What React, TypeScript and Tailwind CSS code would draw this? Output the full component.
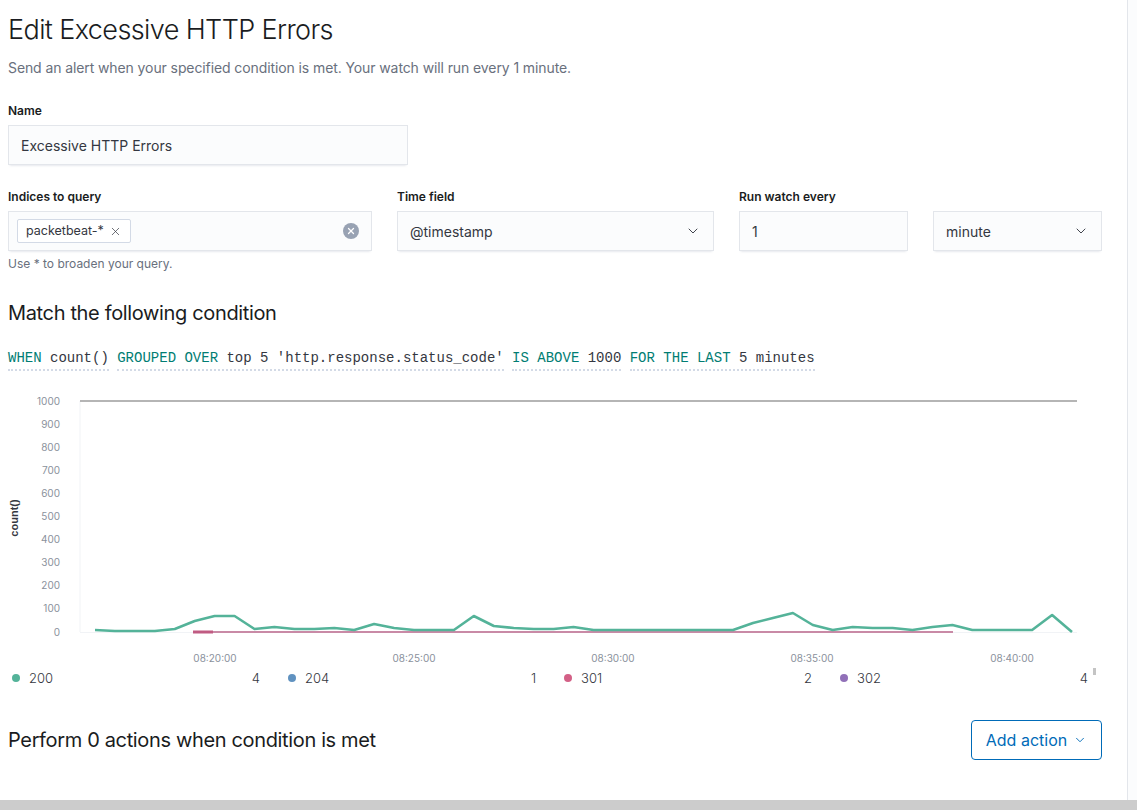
import { ChevronDown, X } from 'lucide-react';

const greenY = [
  629, 630, 630, 630, 628, 620, 615, 615, 628, 626, 628, 628, 627, 629, 623, 627, 629, 629, 629, 615,
  625, 627, 628, 628, 626, 629, 629, 629, 629, 629, 629, 629, 629, 622, 617, 612, 624, 629, 626, 627,
  627, 629, 626, 624, 629, 629, 629, 629, 614, 631,
];

const yTicks = [1000, 900, 800, 700, 600, 500, 400, 300, 200, 100, 0];
const xTicks = [
  { x: 215, label: '08:20:00' },
  { x: 414, label: '08:25:00' },
  { x: 613, label: '08:30:00' },
  { x: 812, label: '08:35:00' },
  { x: 1012, label: '08:40:00' },
];

const legend = [
  { label: '200', value: '4', dot: 'bg-[#54b399]' },
  { label: '204', value: '1', dot: 'bg-[#6092c0]' },
  { label: '301', value: '2', dot: 'bg-[#d36086]' },
  { label: '302', value: '4', dot: 'bg-[#9170b8]' },
];

const fieldBox =
  'h-10 bg-[#fbfcfd] border border-[#e3e6eb] shadow-[0_1px_1px_-1px_rgba(152,162,179,0.2),0_3px_2px_-2px_rgba(152,162,179,0.2)] flex items-center px-3 text-[14px] text-[#343741]';

function Chart() {
  const top = 388;
  const points = greenY
    .map((y, i) => `${(95 + (i * 977) / 49).toFixed(1)},${y}`)
    .join(' ');

  return (
    <svg width="1100" height="278" className="block -ml-2" aria-label="count() over time">
      <g transform={`translate(0,${-top})`}>
        {/* axes */}
        <line x1="80" y1="400" x2="80" y2="631" stroke="#f1f3f6" strokeWidth="1" />
        <line x1="80" y1="631.5" x2="1077" y2="631.5" stroke="#f1f3f6" strokeWidth="1" />
        <line x1="80" y1="400" x2="1077" y2="400" stroke="#b5b5b5" strokeWidth="2" />

        {yTicks.map((t, i) => (
          <text
            key={t}
            x="60"
            y={400 + i * 23.1 + 3.5}
            textAnchor="end"
            fontSize="10"
            fill="#8a919c"
            fontFamily="Inter, sans-serif"
          >
            {t}
          </text>
        ))}

        {xTicks.map((t) => (
          <text
            key={t.label}
            x={t.x}
            y="660.5"
            textAnchor="middle"
            fontSize="10"
            fill="#8a919c"
            fontFamily="Inter, sans-serif"
          >
            {t.label}
          </text>
        ))}

        <text
          transform="translate(18,517) rotate(-90)"
          textAnchor="middle"
          fontSize="11"
          fontWeight="700"
          fill="#343741"
          fontFamily="'Liberation Sans', Arial, sans-serif"
        >
          count()
        </text>

        {/* series */}
        <line x1="193" y1="631" x2="953" y2="631" stroke="#c98aa6" strokeWidth="2" />
        <line x1="193" y1="631" x2="213" y2="631" stroke="#c05b82" strokeWidth="3" />
        <polyline
          points={points}
          fill="none"
          stroke="#54b399"
          strokeWidth="2.6"
          strokeLinejoin="round"
        />
      </g>
    </svg>
  );
}

export default function App() {
  return (
    <div className="w-[1137px] h-[810px] bg-white overflow-hidden font-['Inter',sans-serif] text-[#1a1c21]">
      <div className="flex h-[800px]">
        <main className="w-[1127px] pl-2">
          <h1 className="mt-[13px] text-[27px] leading-[34px] font-light tracking-[-0.6px] text-[#1a1c21]">
            Edit Excessive HTTP Errors
          </h1>
          <p className="mt-[11px] text-[14px] leading-5 tracking-[-0.1px] text-[#69707d]">
            Send an alert when your specified condition is met. Your watch will run every 1 minute.
          </p>

          {/* Name */}
          <div className="mt-[25px]">
            <label className="block text-[12px] leading-4 font-semibold text-[#1a1c21]">Name</label>
            <div className={`mt-[6px] w-[400px] ${fieldBox}`}>Excessive HTTP Errors</div>
          </div>

          {/* Row of query fields */}
          <div className="mt-6 flex gap-[25px]">
            <div className="w-[364px]">
              <label className="block text-[12px] leading-4 font-semibold">Indices to query</label>
              <div className={`mt-[6px] ${fieldBox} !px-2 justify-between`}>
                <span className="flex items-center gap-[5px] h-6 px-2 bg-white border border-[#d3dae6] rounded-[2px] text-[12.5px] text-[#343741]">
                  packetbeat-*
                  <X size={13} strokeWidth={1.3} className="text-[#343741]" />
                </span>
                <span className="w-4 h-4 mr-1 rounded-full bg-[#98a2b3] flex items-center justify-center">
                  <X size={10} strokeWidth={3} className="text-white" />
                </span>
              </div>
              <p className="mt-[5px] text-[12px] leading-4 text-[#69707d]">Use * to broaden your query.</p>
            </div>

            <div className="w-[317px]">
              <label className="block text-[12px] leading-4 font-semibold">Time field</label>
              <div className={`mt-[6px] ${fieldBox} justify-between`}>
                @timestamp
                <ChevronDown size={16} strokeWidth={1.4} className="text-[#343741]" />
              </div>
            </div>

            <div className="w-[169px]">
              <label className="block text-[12px] leading-4 font-semibold">Run watch every</label>
              <div className={`mt-[6px] ${fieldBox}`}>1</div>
            </div>

            <div className="w-[169px] pt-[22px]">
              <div className={`${fieldBox} justify-between`}>
                minute
                <ChevronDown size={16} strokeWidth={1.4} className="text-[#343741]" />
              </div>
            </div>
          </div>

          {/* Condition */}
          <h2 className="mt-[29px] text-[20px] leading-6 font-normal tracking-[-0.35px] text-[#1a1c21]">
            Match the following condition
          </h2>
          <div className="mt-[23px] flex gap-[8.4px] font-['Liberation_Mono',monospace] text-[14px] leading-5 text-[#343741]">
            <span className="border-b-2 border-dotted border-[#d3dae6] pb-[1px]">
              <span className="text-[#017d73]">WHEN</span> count()
            </span>
            <span className="border-b-2 border-dotted border-[#d3dae6] pb-[1px]">
              <span className="text-[#017d73]">GROUPED OVER</span> top 5 'http.response.status_code'
            </span>
            <span className="border-b-2 border-dotted border-[#d3dae6] pb-[1px]">
              <span className="text-[#017d73]">IS ABOVE</span> 1000
            </span>
            <span className="border-b-2 border-dotted border-[#d3dae6] pb-[1px]">
              <span className="text-[#017d73]">FOR THE LAST</span> 5 minutes
            </span>
          </div>

          {/* Chart */}
          <div className="mt-[18px]">
            <Chart />
          </div>

          {/* Legend */}
          <div className="relative mt-[1px] flex h-5 text-[13px] leading-5 text-[#343741]">
            {legend.map((l) => (
              <div key={l.label} className="w-[276px] flex items-center pl-[4px] pr-[24px]">
                <span className={`w-2 h-2 rounded-full ${l.dot}`} />
                <span className="ml-[9px] font-light">{l.label}</span>
                <span className="ml-auto font-light">{l.value}</span>
              </div>
            ))}
            <span className="absolute left-[1085px] top-0 w-[3px] h-[7px] bg-[#c4c4c4]" />
          </div>

          {/* Actions */}
          <div className="mt-8 flex items-center justify-between pr-[25px]">
            <h2 className="text-[20px] leading-6 font-normal tracking-[-0.35px]">
              Perform 0 actions when condition is met
            </h2>
            <button className="h-10 w-[131px] flex items-center justify-center gap-[6px] border border-[#006bb8] rounded-[4px] text-[16px] text-[#006bb8]">
              Add action
              <ChevronDown size={14} strokeWidth={1.6} />
            </button>
          </div>
        </main>
        <div className="w-[10px] border-l border-[#e3e6eb] bg-[#fbfcfd]" />
      </div>
      <div className="h-[10px] bg-[#cccccc]" />
    </div>
  );
}
